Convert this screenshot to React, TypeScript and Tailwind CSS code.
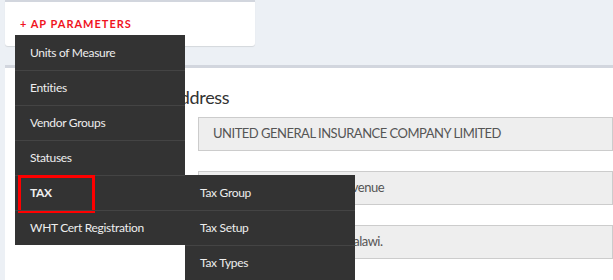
import React from "react";

const menuItems = [
  "Units of Measure",
  "Entities",
  "Vendor Groups",
  "Statuses",
  "TAX",
  "WHT Cert Registration",
];

const taxItems = ["Tax Group", "Tax Setup", "Tax Types"];

const App = () => {
  return (
    <div
      className="relative h-[280px] w-[613px] overflow-hidden bg-[#ecf0f5] pl-[5px]"
      style={{ fontFamily: "Lato, 'Liberation Sans', sans-serif" }}
    >
      {/* parameters header */}
      <div className="flex h-[46px] w-[250px] items-center rounded-b-[3px] border-t-2 border-[#d2d6de] bg-white pl-[15px] shadow-[0_1px_1px_rgba(0,0,0,0.1)]">
        <span className="text-[11px] font-bold tracking-[1px] text-[#f0141e]">
          + AP PARAMETERS
        </span>
      </div>

      {/* company card */}
      <div className="mt-[19px] h-[220px] border-t-[3px] border-[#d2d6de] bg-white">
        <h3 className="pl-[163px] pt-[17px] text-[18px] leading-[24px] tracking-[-0.3px] text-[#333]">
          Address
        </h3>
        <div className="flex flex-col gap-[20px] pl-[193px] pt-[8px] text-[13px] tracking-[-0.5px] text-[#555]">
          <div className="flex h-[34px] items-center border border-[#cccccc] bg-[#eeeeee] pl-[14px]">
            UNITED GENERAL INSURANCE COMPANY LIMITED
          </div>
          <div className="flex h-[34px] items-center border border-[#cccccc] bg-[#eeeeee] pl-[14px]">
            Plot No. 1/29, Hannover Avenue
          </div>
          <div className="flex h-[34px] items-center border border-[#cccccc] bg-[#eeeeee] pl-[14px]">
            P.O. Box 1383, Blantyre, Malawi.
          </div>
        </div>
      </div>

      {/* dropdown menu */}
      <div className="absolute left-[15px] top-[35px] w-[170px] bg-[#333333]">
        {menuItems.map((item, i) => (
          <div
            key={item}
            className={`relative flex h-[35px] items-center pl-[15px] text-[12px] tracking-[-0.3px] text-[#eeeeee] ${
              i > 0 ? "border-t border-[#444444]" : ""
            } ${item === "TAX" ? "font-bold" : ""}`}
          >
            {item}
            {item === "TAX" && (
              <div className="absolute left-[3px] top-[-1px] h-[38px] w-[77px] border-[3px] border-[#ff0000]" />
            )}
          </div>
        ))}
      </div>

      {/* tax submenu */}
      <div className="absolute left-[185px] top-[175px] w-[170px] bg-[#333333]">
        {taxItems.map((item, i) => (
          <div
            key={item}
            className={`flex h-[35px] items-center pl-[15px] text-[12px] tracking-[-0.3px] text-[#eeeeee] ${
              i > 0 ? "border-t border-[#444444]" : ""
            }`}
          >
            {item}
          </div>
        ))}
      </div>
    </div>
  );
};

export default App;
